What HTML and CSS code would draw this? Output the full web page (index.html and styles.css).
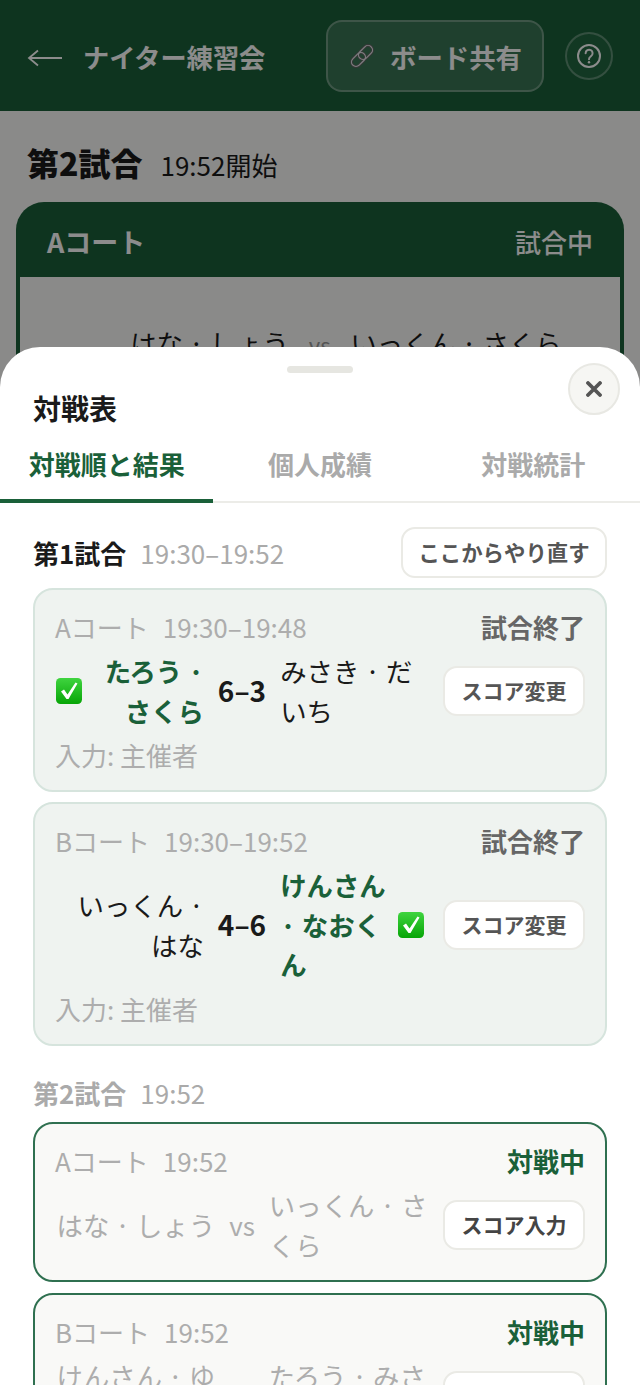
FILE: index.html
```html
<!DOCTYPE html>
<html lang="ja">
<head>
<meta charset="utf-8">
<title>ナイター練習会</title>
<link rel="stylesheet" href="styles.css">
</head>
<body>
<div class="page">
  <header class="topbar">
    <svg class="back" viewBox="0 0 36 20" width="36" height="20"><path d="M2 10h33M11 2.500L2 10l9 7.500" fill="none" stroke="#fff" stroke-width="1.800"/></svg>
    <span class="event">ナイター練習会</span>
    <button class="share">
      <svg class="link" viewBox="0 0 28 26" width="28" height="26"><g transform="rotate(-45 14 13)" fill="none"><rect x="1" y="8.500" width="16" height="9" rx="4.500" stroke="#666" stroke-width="2.800"/><rect x="11" y="8.500" width="16" height="9" rx="4.500" stroke="#666" stroke-width="2.800"/><rect x="1" y="8.500" width="16" height="9" rx="4.500" stroke="#e4e6e9" stroke-width="1.200"/><rect x="11" y="8.500" width="16" height="9" rx="4.500" stroke="#e4e6e9" stroke-width="1.200"/></g></svg>
      <span>ボード共有</span>
    </button>
    <button class="help"><svg viewBox="0 0 26 26" width="26" height="26"><circle cx="13" cy="13" r="11" fill="none" stroke="#fff" stroke-width="2"/><path d="M9.600 10.200a3.500 3.500 0 1 1 5.400 3c-1.300.9-2 1.500-2 3" fill="none" stroke="#fff" stroke-width="2" stroke-linecap="round"/><circle cx="13" cy="19.300" r="1.200" fill="#fff"/></svg></button>
  </header>
  <main class="under">
    <h1 class="round"><b>第2試合</b><span>19:52開始</span></h1>
    <section class="court">
      <div class="court-head"><b>Aコート</b><span>試合中</span></div>
      <div class="court-body">はな · しょう <small>vs</small> いっくん · さくら</div>
    </section>
  </main>
</div>
<div class="overlay"></div>
<aside class="sheet">
  <div class="handle"></div>
  <button class="close"><svg viewBox="0 0 16 16" width="16" height="16"><path d="M2 2l12 12M14 2L2 14" stroke="#555" stroke-width="3.800" stroke-linecap="round"/></svg></button>
  <h2 class="sheet-title">対戦表</h2>
  <nav class="tabs">
    <a class="tab active">対戦順と結果</a>
    <a class="tab">個人成績</a>
    <a class="tab">対戦統計</a>
  </nav>
  <div class="content">
    <div class="section-head">
      <b>第1試合</b><span class="time">19:30–19:52</span>
      <button class="redo">ここからやり直す</button>
    </div>
    <article class="card done">
      <div class="card-head"><span class="meta">Aコート<i>19:30–19:48</i></span><b class="status">試合終了</b></div>
      <div class="row">
        <div class="match">
          <div class="team left win"><svg class="check" viewBox="0 0 26 26" width="26" height="26"><defs><linearGradient id="g1" x1="0" y1="0" x2="0" y2="1"><stop offset="0" stop-color="#3fd43f"/><stop offset="1" stop-color="#07a507"/></linearGradient></defs><rect width="26" height="26" rx="4.500" fill="url(#g1)"/><polygon points="5,13.500 8,11.500 11.500,16.500 19.500,4.500 21.500,5.500 12.500,21 10.500,21" fill="#fff"/></svg><span>たろう · さくら</span></div>
          <b class="score">6–3</b>
          <div class="team">みさき · だいち</div>
        </div>
        <button class="score-btn">スコア変更</button>
      </div>
      <div class="input">入力: 主催者</div>
    </article>
    <article class="card done">
      <div class="card-head"><span class="meta">Bコート<i>19:30–19:52</i></span><b class="status">試合終了</b></div>
      <div class="row">
        <div class="match">
          <div class="team left">いっくん · はな</div>
          <b class="score">4–6</b>
          <div class="team win"><span>けんさん · なおくん</span><svg class="check" viewBox="0 0 26 26" width="26" height="26"><defs><linearGradient id="g2" x1="0" y1="0" x2="0" y2="1"><stop offset="0" stop-color="#3fd43f"/><stop offset="1" stop-color="#07a507"/></linearGradient></defs><rect width="26" height="26" rx="4.500" fill="url(#g2)"/><polygon points="5,13.500 8,11.500 11.500,16.500 19.500,4.500 21.500,5.500 12.500,21 10.500,21" fill="#fff"/></svg></div>
        </div>
        <button class="score-btn">スコア変更</button>
      </div>
      <div class="input">入力: 主催者</div>
    </article>
    <div class="section-head second">
      <b>第2試合</b><span class="time">19:52</span>
    </div>
    <article class="card live">
      <div class="card-head"><span class="meta">Aコート<i>19:52</i></span><b class="status">対戦中</b></div>
      <div class="row">
        <div class="match">
          <div class="team left">はな · しょう</div>
          <span class="vs">vs</span>
          <div class="team">いっくん · さくら</div>
        </div>
        <button class="score-btn strong">スコア入力</button>
      </div>
    </article>
    <article class="card live">
      <div class="card-head"><span class="meta">Bコート<i>19:52</i></span><b class="status">対戦中</b></div>
      <div class="row">
        <div class="match">
          <div class="team left">けんさん · ゆうき</div>
          <span class="vs">vs</span>
          <div class="team">たろう · みさき</div>
        </div>
        <button class="score-btn strong">スコア入力</button>
      </div>
    </article>
  </div>
</aside>
</body>
</html>
```
FILE: styles.css
```css
* { box-sizing: border-box; }
html, body { margin: 0; height: 100%; overflow: hidden; }
body {
  position: relative;
  background: #fbfbfa;
  color: #1a1a1a;
  font-family: "Noto Sans CJK JP", "Noto Sans", sans-serif;
  font-size: 26px;
  line-height: 39px;
}
button { font-family: inherit; padding: 0; cursor: pointer; }
h1, h2 { margin: 0; }

.topbar {
  height: 111px;
  background: #1a6039;
  color: #fff;
  display: flex;
  align-items: center;
  padding: 0 27px 0 27px;
}
.back { flex: none; margin: 4px 20px 0 0; }
.event { font-size: 26.200px; font-weight: 700; flex: 1; padding-top: 3px; }
.share {
  width: 218px;
  height: 72px;
  display: flex;
  align-items: center;
  gap: 14px;
  padding-left: 20px;
  border: 2px solid rgba(255,255,255,.28);
  border-radius: 16px;
  background: rgba(255,255,255,.14);
  color: #fff;
  font-size: 26.400px;
  font-weight: 700;
}
.share span { padding-top: 2px; }
.help {
  width: 48px;
  height: 48px;
  margin-left: 21px;
  display: flex;
  align-items: center;
  justify-content: center;
  border: 2px solid rgba(255,255,255,.28);
  border-radius: 50%;
  background: rgba(255,255,255,.04);
}
.under { padding: 28px 16px 0; }
.round { display: flex; align-items: baseline; gap: 18px; padding-left: 11px; height: 63px; font-size: 32px; font-weight: 700; line-height: 46px; }
.round span { font-size: 26px; font-weight: 400; }
.court { border-radius: 28px; overflow: hidden; background: #1a6039; padding: 0 4px 4px; }
.court-head { height: 75px; padding: 4px 27px 0; color: #fff; display: flex; justify-content: space-between; align-items: center; }
.court-head b { font-size: 27px; }
.court-head span { font-weight: 500; }
.court-body { background: #fbfbfa; padding: 46px 0 20px 52px; text-align: center; font-size: 26.400px; }
.court-body small { font-size: 22px; color: #999; margin: 0 14px; }

.overlay { position: absolute; inset: 0; background: rgba(0,0,0,.45); }
.sheet {
  position: absolute;
  left: 0;
  right: 0;
  top: 347px;
  bottom: 0;
  overflow: hidden;
  background: #fff;
  border-radius: 40px 40px 0 0;
}
.handle { position: absolute; top: 19px; left: 287px; width: 66px; height: 7px; border-radius: 4px; background: #e6e6e1; }
.close {
  position: absolute;
  top: 16px;
  right: 20px;
  width: 52px;
  height: 52px;
  border: 2px solid #e8e8e3;
  border-radius: 50%;
  background: #f6f6f3;
  display: flex;
  align-items: center;
  justify-content: center;
}
.sheet-title { padding: 41px 33px 0; font-size: 28px; font-weight: 700; line-height: 40px; }
.tabs { display: flex; height: 75px; border-bottom: 2px solid #ecece8; }
.tab { flex: 1; text-align: center; padding-top: 16px; font-weight: 700; color: #aaa; margin-bottom: -2px; }
.tab.active { color: #1a6039; border-bottom: 4px solid #1a6039; }
.content { padding: 23px 33px 0; }
.section-head { display: flex; align-items: center; height: 52px; margin-bottom: 10px; }
.section-head b { font-weight: 700; margin-right: 14px; }
.time { color: #aaa; }
.redo {
  margin-left: auto;
  width: 206px;
  height: 51px;
  border: 2px solid #eaeae5;
  border-radius: 14px;
  background: #fff;
  color: #555;
  font-size: 21.400px;
  font-weight: 700;
  line-height: 1;
}
.section-head.second { color: #aaa; height: 28px; margin: 33px 0 15px; }
.card {
  border: 2px solid;
  border-radius: 20px;
  padding: 17px 20px 16px;
  margin-bottom: 10px;
}
.card.done { background: #eff3f0; border-color: #d6e4dd; }
.card.live { background: #f9f9f7; border-color: #2f7050; margin-bottom: 11px; }
.card-head { display: flex; justify-content: space-between; align-items: center; height: 39px; }
.meta { color: #adadad; }
.meta i { font-style: normal; margin-left: 14px; }
.status { font-weight: 700; color: #666; }
.live .status { color: #1a6039; }
.row { display: flex; align-items: center; margin-top: 5px; }
.match { flex: 1; min-width: 0; display: grid; grid-template-columns: 1fr auto 1fr; column-gap: 14px; align-items: center; }
.team { display: flex; align-items: center; gap: 8px; font-size: 26.400px; line-height: 39.600px; }
.team.left { justify-content: flex-end; text-align: right; }
.team > span { flex: 1; }
.win { color: #1a6039; font-weight: 700; }
.check { flex: none; margin: 0 5px 0 1px; }
.score { font-size: 28px; font-weight: 700; color: #1a1a1a; }
.vs { color: #adadad; }
.live .team { color: #adadad; }
.score-btn {
  flex: none;
  width: 142px;
  height: 50px;
  margin-left: 14px;
  border: 2px solid #eaeae5;
  border-radius: 14px;
  background: #fff;
  color: #555;
  font-size: 21px;
  font-weight: 700;
  line-height: 1;
}
.score-btn.strong { color: #444; }
.input { color: #adadad; margin-top: 5px; }
```
